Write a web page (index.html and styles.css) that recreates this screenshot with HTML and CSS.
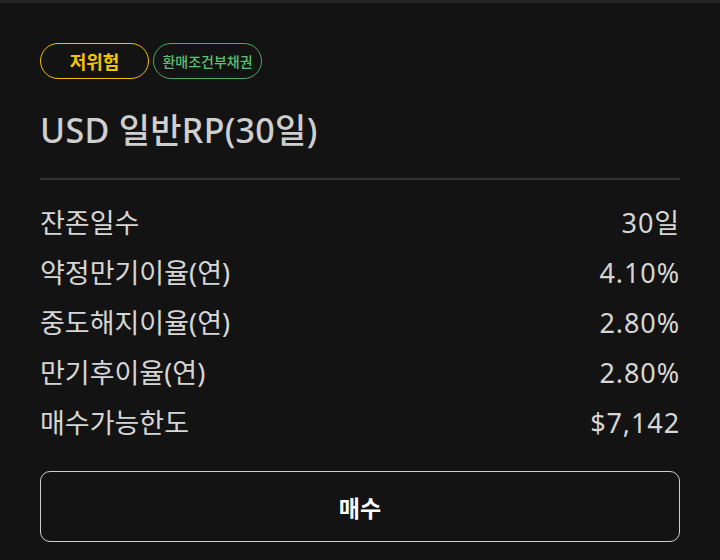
FILE: index.html
```html
<!DOCTYPE html>
<html lang="ko">
<head>
  <meta charset="UTF-8">
  <meta name="viewport" content="width=device-width, initial-scale=1.0">
  <title>USD 일반RP(30일)</title>
  <link rel="stylesheet" href="styles.css">
</head>
<body>
  <div class="topbar"></div>
  <div class="container">
    <div class="tags">
      <span class="tag tag-risk">저위험</span>
      <span class="tag tag-type">환매조건부채권</span>
    </div>

    <h1 class="title">USD 일반RP(30일)</h1>

    <ul class="info">
      <li><span>잔존일수</span><span class="val">30일</span></li>
      <li><span>약정만기이율(연)</span><span class="val">4.10%</span></li>
      <li><span>중도해지이율(연)</span><span class="val">2.80%</span></li>
      <li><span>만기후이율(연)</span><span class="val">2.80%</span></li>
      <li><span>매수가능한도</span><span class="val">$7,142</span></li>
    </ul>

    <button class="buy">매수</button>
  </div>
</body>
</html>
```

FILE: styles.css
```css
body {
  margin: 0;
  background-color: #131313;
  color: #d6d6d6;
  font-family: "Noto Sans", "Noto Sans CJK KR", sans-serif;
}
.topbar {
  height: 3px;
  background-color: #232323;
}
.container {
  padding: 40px 40px 0;
}
.tags {
  display: flex;
  gap: 4px;
}
.tag {
  display: flex;
  align-items: center;
  justify-content: center;
  width: 109px;
  height: 36px;
  box-sizing: border-box;
  border-radius: 18px;
}
.tag-risk {
  border: 1px solid #f2c000;
  color: #f5c400;
  font-size: 18px;
  font-weight: 700;
}
.tag-type {
  border: 1px solid #4fa866;
  color: #5fbf72;
  font-size: 14px;
  font-weight: 500;
}
.title {
  margin: 31px 0 0;
  font-size: 34px;
  line-height: 40px;
  font-weight: 500;
  letter-spacing: 0.3px;
  color: #cfcfcf;
}
.info {
  list-style: none;
  margin: 28px 0 0;
  padding: 18px 0 0;
  border-top: 2px solid #333;
}
.info li {
  display: flex;
  justify-content: space-between;
  font-size: 27px;
  line-height: 50px;
}
.val {
  letter-spacing: 0.9px;
}
.buy {
  display: block;
  width: 100%;
  height: 71px;
  margin-top: 23px;
  border: 1px solid #cfcfcf;
  border-radius: 10px;
  background: transparent;
  color: #fff;
  font-family: inherit;
  font-size: 23px;
  font-weight: 700;
}
```
